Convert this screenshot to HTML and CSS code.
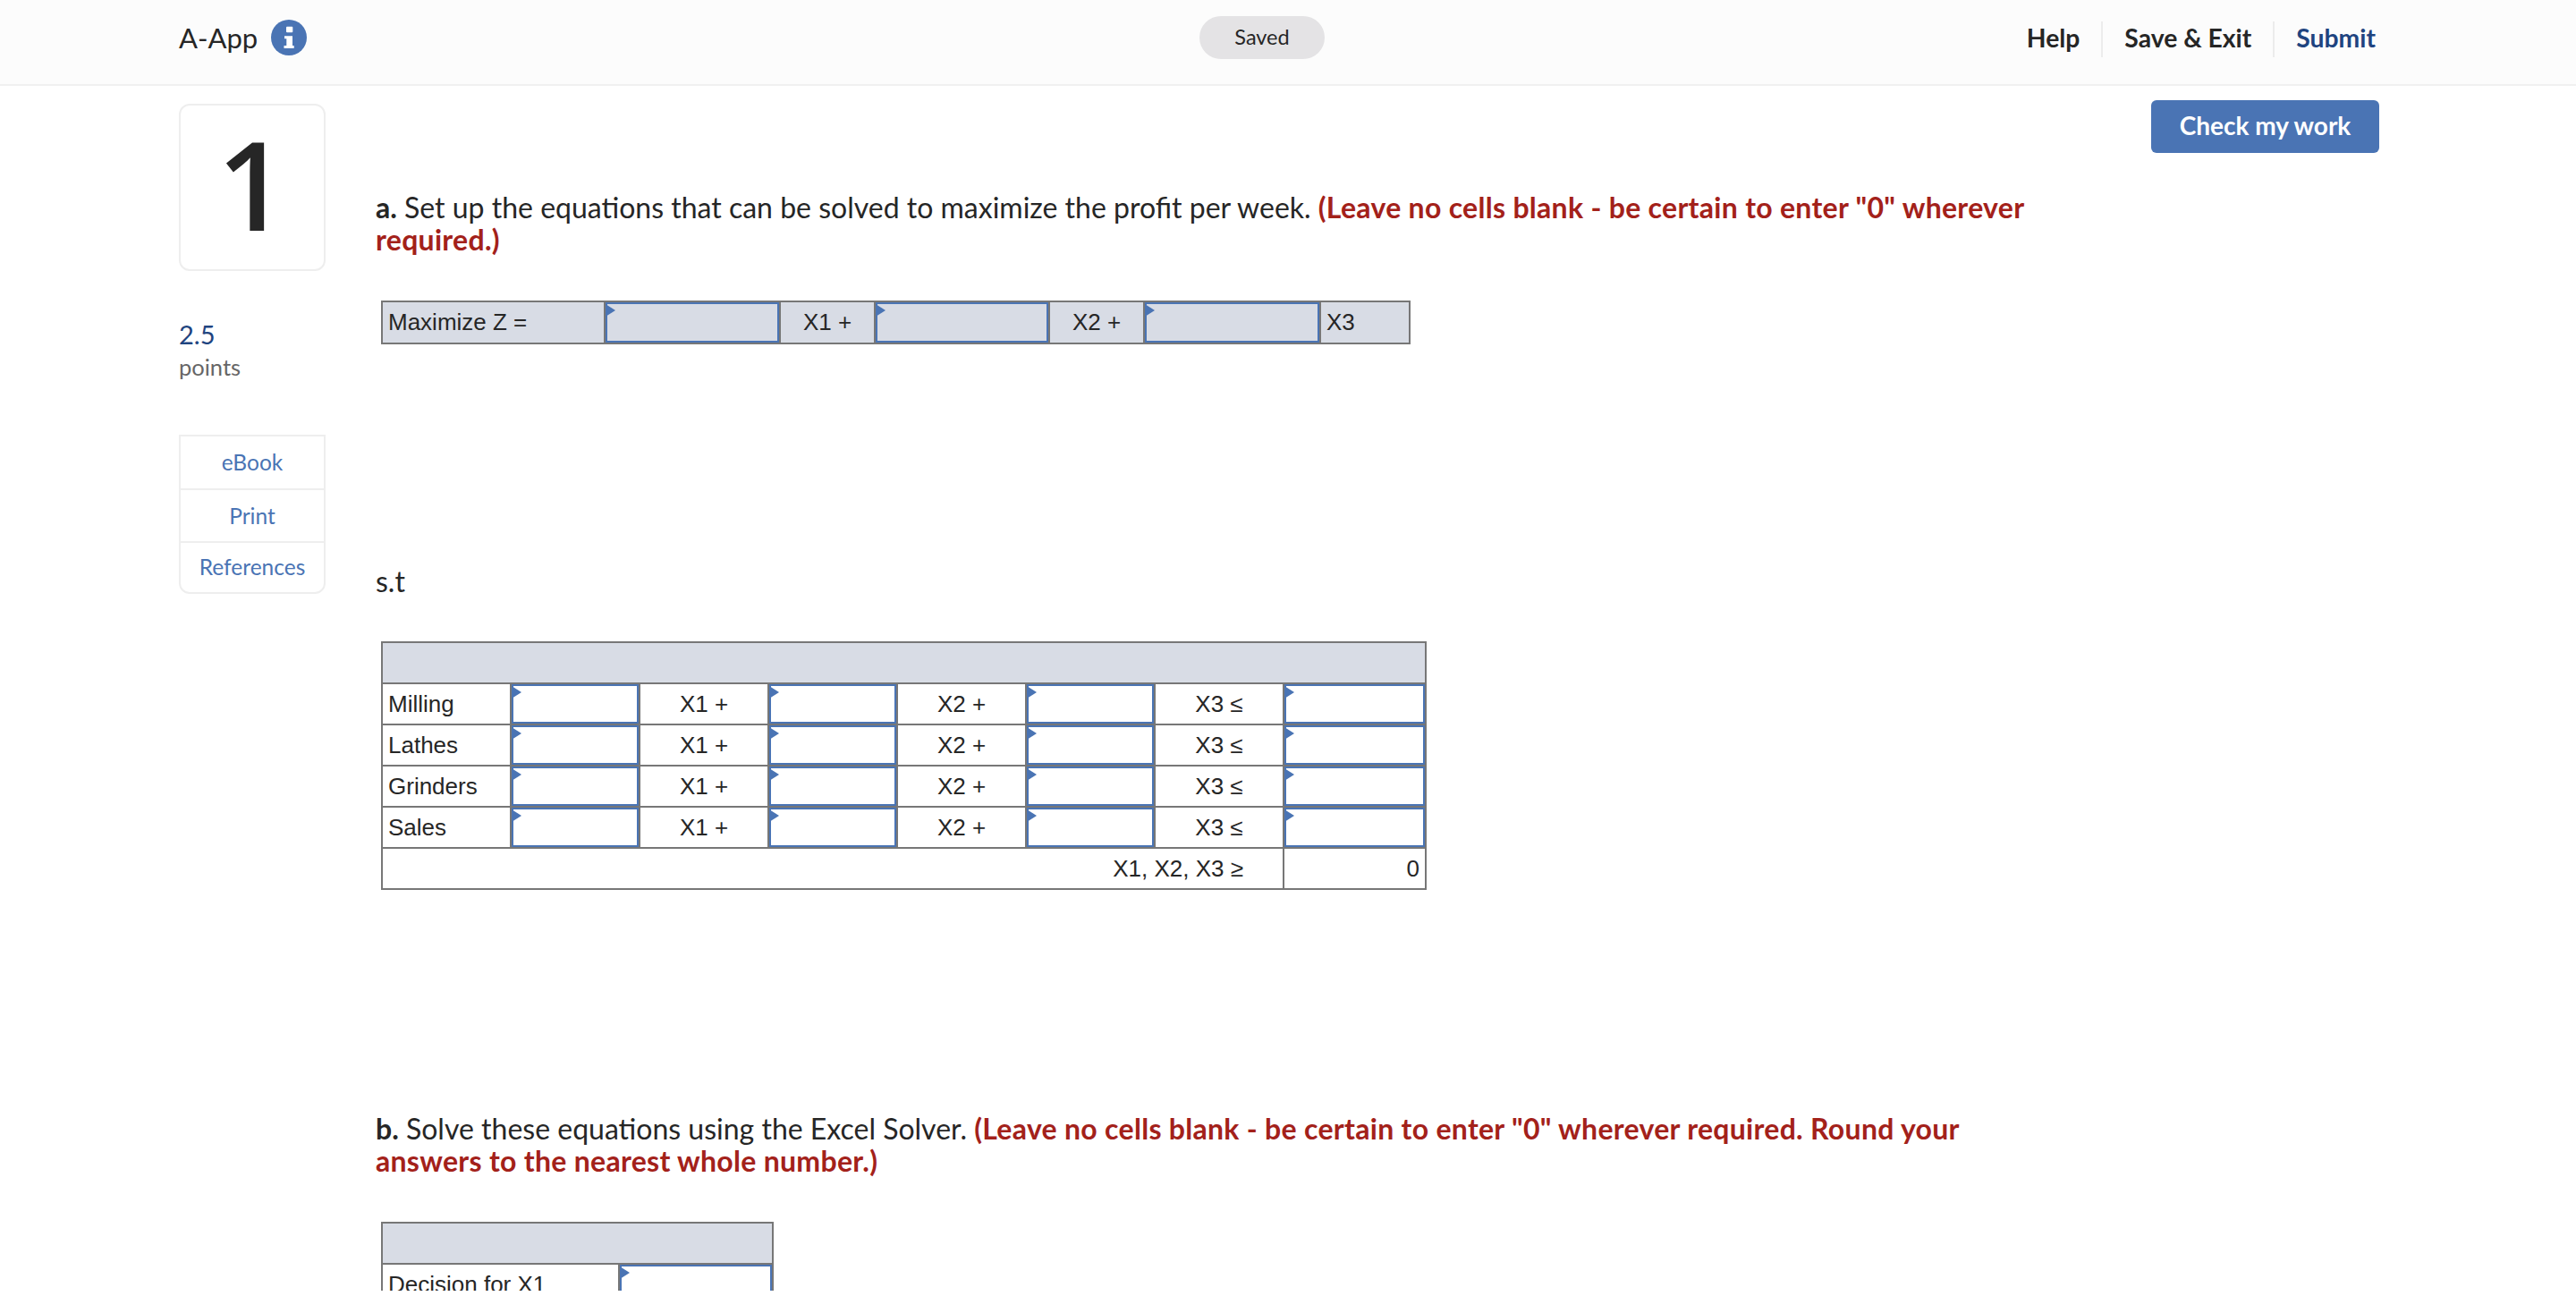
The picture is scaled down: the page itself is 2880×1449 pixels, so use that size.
FILE: index.html
```html
<!DOCTYPE html>
<html lang="en">
<head>
<meta charset="utf-8">
<title>A-App</title>
<link rel="stylesheet" href="styles.css">
</head>
<body>
<div class="page">
  <header class="topbar">
    <div class="brand">
      <span class="brand-name">A-App</span>
      <svg class="info" viewBox="0 0 40 40" aria-hidden="true">
        <circle cx="20" cy="20" r="20" fill="#4a74b4"/>
        <rect x="17" y="7.7" width="7.3" height="6.6" rx="1" fill="#fff"/>
        <path d="M15 18.3h9v10.7h1.7v3H14.5v-3h2.8v-7.7H15z" fill="#fff"/>
      </svg>
    </div>
    <div class="saved">Saved</div>
    <nav class="actions">
      <a class="action">Help</a>
      <a class="action">Save &amp; Exit</a>
      <a class="action submit">Submit</a>
    </nav>
  </header>
  <div class="content">
    <aside class="side">
      <div class="qnum">1</div>
      <div class="score">2.5</div>
      <div class="score-label">points</div>
      <ul class="links">
        <li class="link l1">eBook</li>
        <li class="link l2">Print</li>
        <li class="link l3">References</li>
      </ul>
    </aside>
    <main class="main">
      <div class="check-row"><button class="check">Check my work</button></div>
      <p class="prompt pa"><b>a.</b> Set up the equations that can be solved to maximize the profit per week. <b class="red">(Leave no cells blank - be certain to enter "0" wherever required.)</b></p>
      <table class="sheet t1">
        <colgroup><col class="c1a"><col class="c1b"><col class="c1c"><col class="c1d"><col class="c1e"><col class="c1f"><col class="c1g"></colgroup>
        <tr class="shaded row47">
          <td>Maximize Z =</td>
          <td class="cell-in"><div class="inp"></div></td>
          <td class="ctr">X1 +</td>
          <td class="cell-in"><div class="inp"></div></td>
          <td class="ctr">X2 +</td>
          <td class="cell-in"><div class="inp"></div></td>
          <td>X3</td>
        </tr>
      </table>
      <p class="st">s.t</p>
      <table class="sheet t2">
        <colgroup><col class="c2"><col class="c2"><col class="c2"><col class="c2"><col class="c2"><col class="c2"><col class="c2"><col class="c2l"></colgroup>
        <tr class="shaded row46"><td colspan="8"></td></tr>
        <tr class="row46"><td>Milling</td><td class="cell-in"><div class="inp"></div></td><td class="ctr">X1 +</td><td class="cell-in"><div class="inp"></div></td><td class="ctr">X2 +</td><td class="cell-in"><div class="inp"></div></td><td class="ctr">X3 ≤</td><td class="cell-in"><div class="inp"></div></td></tr>
        <tr class="row46"><td>Lathes</td><td class="cell-in"><div class="inp"></div></td><td class="ctr">X1 +</td><td class="cell-in"><div class="inp"></div></td><td class="ctr">X2 +</td><td class="cell-in"><div class="inp"></div></td><td class="ctr">X3 ≤</td><td class="cell-in"><div class="inp"></div></td></tr>
        <tr class="row46"><td>Grinders</td><td class="cell-in"><div class="inp"></div></td><td class="ctr">X1 +</td><td class="cell-in"><div class="inp"></div></td><td class="ctr">X2 +</td><td class="cell-in"><div class="inp"></div></td><td class="ctr">X3 ≤</td><td class="cell-in"><div class="inp"></div></td></tr>
        <tr class="row46"><td>Sales</td><td class="cell-in"><div class="inp"></div></td><td class="ctr">X1 +</td><td class="cell-in"><div class="inp"></div></td><td class="ctr">X2 +</td><td class="cell-in"><div class="inp"></div></td><td class="ctr">X3 ≤</td><td class="cell-in"><div class="inp"></div></td></tr>
        <tr class="row46"><td colspan="7" class="rgt-pad">X1, X2, X3 ≥</td><td class="rgt">0</td></tr>
      </table>
      <p class="prompt pb"><b>b.</b> Solve these equations using the Excel Solver. <b class="red">(Leave no cells blank - be certain to enter "0" wherever required. Round your answers to the nearest whole number.)</b></p>
      <table class="sheet t3">
        <colgroup><col class="c3a"><col class="c3b"></colgroup>
        <tr class="shaded row46"><td colspan="2"></td></tr>
        <tr class="row46"><td>Decision for X1</td><td class="cell-in"><div class="inp"></div></td></tr>
      </table>
    </main>
  </div>
</div>
</body>
</html>
```
FILE: styles.css
```css
* { box-sizing: border-box; }
html, body { margin: 0; padding: 0; background: #fff; }
body { font-family: Lato, "Open Sans", sans-serif; color: #262626; }
.page { height: 1443px; overflow: hidden; }

.topbar { height: 96px; background: #fcfcfc; border-bottom: 2px solid #f0f0f0; padding: 0 224px 0 200px; display: grid; grid-template-columns: 1fr auto 1fr; align-items: start; }
.brand { display: flex; align-items: center; gap: 15px; height: 84px; }
.brand-name { font-size: 31px; }
.info { width: 40px; height: 40px; }
.saved { width: 140px; height: 48px; margin: 18px 34px 0 0; padding-bottom: 2px; background: #e4e3e5; border-radius: 24px; display: flex; align-items: center; justify-content: center; font-size: 23.5px; }
.actions { display: flex; justify-content: flex-end; align-items: center; height: 40px; margin-top: 24px; }
.action { font-size: 28.3px; font-weight: 700; padding: 0 24px 3px; border-left: 2px solid #ececec; line-height: 37px; }
.action:first-child { border-left: 0; }
.action:last-child { padding-right: 0; }
.submit { color: #1f4480; }

.content { display: flex; padding-left: 200px; }
.side { width: 164px; padding-top: 20px; flex: none; }
.qnum { height: 187px; padding-bottom: 10px; border: 2px solid #eee; border-radius: 12px; display: flex; align-items: center; justify-content: center; font-family: "Open Sans", sans-serif; font-weight: 600; font-size: 137px; color: #262626; }
.score { margin-top: 53px; font-size: 29px; line-height: 36px; color: #1f4480; }
.score-label { font-size: 25.5px; line-height: 36px; color: #666; }
.links { list-style: none; margin: 58px 0 0; padding: 0; border: 2px solid #eee; border-radius: 0 0 12px 12px; }
.link { display: flex; align-items: center; justify-content: center; font-size: 24.5px; color: #4a74b4; border-top: 2px solid #eee; }
.l1 { border-top: 0; height: 58px; padding-bottom: 2px; }
.l2 { height: 59px; }
.l3 { height: 57px; padding-bottom: 3px; }

.main { width: 2280px; padding-left: 56px; }
.check-row { width: 2296px; display: flex; justify-content: flex-end; padding-top: 16px; margin-left: -56px; }
.check { width: 255px; height: 59px; border: 0; background: #4a74b4; border-radius: 6px; color: #fff; font-family: inherit; font-size: 28px; font-weight: 700; padding: 0 0 3px; }
.prompt { width: 1860px; margin: 0; font-size: 32px; line-height: 36px; }
.pa { margin-top: 43px; }
.red { color: #a3211a; letter-spacing: .29px; }
.st { margin: 247px 0 0; font-size: 32px; line-height: 36px; }

.sheet { border-collapse: collapse; table-layout: fixed; font-family: "Liberation Sans", Arial, sans-serif; font-size: 26px; color: #262626; margin-left: 6px; }
.sheet td { border: 2px solid #777; padding: 0 6px; height: 46px; vertical-align: middle; overflow: hidden; white-space: nowrap; }
.shaded { background: #d8dce5; }
.row47 td { height: 47px; }
.ctr { text-align: center; }
.rgt { text-align: right; }
.rgt-pad { text-align: right; padding-right: 44px !important; }
.sheet td.cell-in { padding: 0; }
.inp { height: 44px; border: 2px solid #4a74b4; position: relative; }
.row47 .inp { height: 45px; }
.inp::before { content: ""; position: absolute; left: -2px; top: 0; border-left: 11px solid #4a74b4; border-top: 7px solid transparent; border-bottom: 7px solid transparent; }

.t1 { margin-top: 50px; width: 1149px; }
.c1a { width: 249px; } .c1b { width: 196px; } .c1c { width: 106px; } .c1d { width: 195px; } .c1e { width: 106px; } .c1f { width: 197px; } .c1g { width: 100px; }
.t2 { margin-top: 49px; width: 1167px; }
.c2 { width: 144px; } .c2l { width: 159px; }
.pb { margin-top: 249px; }
.t3 { margin-top: 50px; width: 437px; }
.c3a { width: 265px; } .c3b { width: 172px; }
```
